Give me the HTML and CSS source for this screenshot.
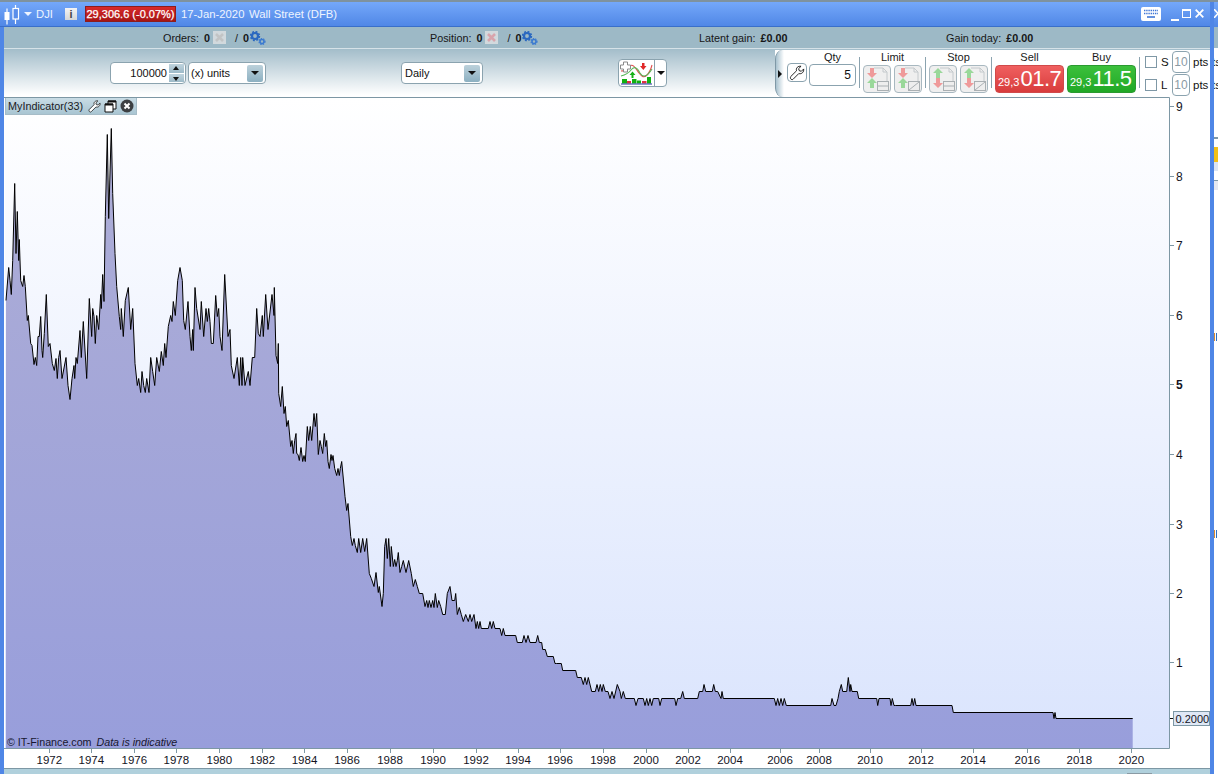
FILE: index.html
```html
<!DOCTYPE html>
<html lang="en">
<head>
<meta charset="utf-8">
<title>DJI - Wall Street (DFB)</title>
<link rel="stylesheet" href="styles.css">
</head>
<body>
<svg class="defs" width="0" height="0" aria-hidden="true">
  <symbol id="gears" viewBox="0 0 16 14">
    <circle cx="5" cy="5" r="3" fill="none" stroke="#2a68c0" stroke-width="2.2"/>
    <circle cx="5" cy="5" r="4.4" fill="none" stroke="#2a68c0" stroke-width="1.6" stroke-dasharray="1.9 1.55"/>
    <circle cx="12" cy="10.5" r="2" fill="none" stroke="#3b7ad0" stroke-width="1.6"/>
    <circle cx="12" cy="10.5" r="3" fill="none" stroke="#3b7ad0" stroke-width="1.2" stroke-dasharray="1.4 1.1"/>
  </symbol>
  <symbol id="cancel" viewBox="0 0 13 13">
    <rect width="13" height="13" fill="#e4e4e4" opacity=".75"/>
    <path d="M3 3l7 7M10 3l-7 7" stroke="currentColor" stroke-width="2.6"/>
  </symbol>
  <symbol id="wrench" viewBox="0 0 20 20">
    <path d="M3 14L9.5 7.5C8.5 4.5 11 2 14.5 2.5L11.8 5.2L12.5 7.4L14.8 8.1L17.4 5.5C18 9 15 11.6 12 10.6L5.6 17C4 18.4 1.8 16 3 14Z" fill="#fff" stroke="#111" stroke-width="1"/>
  </symbol>
  <symbol id="arrows-rg" viewBox="0 0 28 28">
    <path d="M7 3h4v5h3l-5 5-5-5h3z" fill="#ef9a9a"/>
    <path d="M9 13l5 5h-3v5H7v-5H4z" fill="#9ad89a"/>
  </symbol>
  <symbol id="arrows-gr" viewBox="0 0 28 28">
    <path d="M9 3l5 5h-3v5H7V8H4z" fill="#9ad89a"/>
    <path d="M7 13h4v5h3l-5 5-5-5h3z" fill="#ef9a9a"/>
  </symbol>
  <symbol id="page-table" viewBox="0 0 28 28">
    <path d="M11 3h9l4 4v9" fill="none" stroke="#c4c9cc"/>
    <path d="M20 3v4h4" fill="none" stroke="#c4c9cc"/>
    <rect x="14.5" y="16.5" width="11" height="9" fill="#eee" stroke="#aab0b3"/>
    <path d="M14.5 21h11" stroke="#aab0b3"/>
  </symbol>
  <symbol id="page-line" viewBox="0 0 28 28">
    <path d="M11 3h9l4 4v9" fill="none" stroke="#c4c9cc"/>
    <path d="M20 3v4h4" fill="none" stroke="#c4c9cc"/>
    <rect x="14.5" y="16.5" width="11" height="9" fill="#eee" stroke="#aab0b3"/>
    <path d="M15 25l10-8" stroke="#aab0b3"/>
  </symbol>
</svg>
<div class="screen">
  <div class="window">
    <header class="titlebar">
      <svg class="candles" viewBox="0 0 16 20" width="16" height="20" aria-hidden="true">
        <path d="M3 3.5v16M11.5 0v19" stroke="#fff" stroke-width="1.2"/>
        <rect x="0.5" y="7" width="5" height="8" fill="#fff"/>
        <rect x="9" y="3.5" width="5.5" height="10.5" fill="#5a8eea" stroke="#fff" stroke-width="1.2"/>
      </svg>
      <span class="caret-white"></span>
      <span class="symbol">DJI</span>
      <span class="info">i</span>
      <span class="badge">29,306.6 (-0.07%)</span>
      <span class="title-date">17-Jan-2020</span>
      <span class="title-name">Wall Street (DFB)</span>
      <svg class="keyboard" viewBox="0 0 20 14" width="20" height="14" aria-hidden="true">
        <rect width="20" height="14" rx="2" fill="#fff"/>
        <path d="M3 3.5h14M3 6.5h14" stroke="#3f76d6" stroke-width="1.6" stroke-dasharray="1.4 .8"/>
        <path d="M6 10h8" stroke="#3f76d6" stroke-width="1.6"/>
      </svg>
      <span class="win-min"></span>
      <span class="win-max"></span>
      <svg class="win-close" viewBox="0 0 9 9" width="9" height="9" aria-hidden="true"><path d="M.7.7l7.6 7.6M8.3.7L.7 8.3" stroke="#fff" stroke-width="1.8"/></svg>
    </header>

    <div class="statusbar">
      <div class="stat stat-orders">
        <span>Orders:</span><b class="num">0</b>
        <svg class="cancel cancel-grey" width="13" height="13"><use href="#cancel"/></svg>
        <span class="slash">/</span><b class="num-b">0</b>
        <svg class="gears" width="16" height="14"><use href="#gears"/></svg>
      </div>
      <div class="stat stat-position">
        <span>Position:</span><b class="num">0</b>
        <svg class="cancel cancel-pink" width="13" height="13"><use href="#cancel"/></svg>
        <span class="slash">/</span><b class="num-b">0</b>
        <svg class="gears" width="16" height="14"><use href="#gears"/></svg>
      </div>
      <div class="stat stat-latent"><span>Latent gain:</span><b class="num">£0.00</b></div>
      <div class="stat"><span>Gain today:</span><b class="num">£0.00</b></div>
    </div>

    <div class="toolbar">
      <div class="field spinner">
        <span class="field-value">100000</span>
        <span class="spin"><i class="spin-up"></i><i class="spin-down"></i></span>
      </div>
      <div class="field select select-units"><span>(x) units</span><i class="select-btn"></i></div>
      <div class="field select select-period"><span>Daily</span><i class="select-btn"></i></div>
      <div class="chart-btn">
        <svg class="chart-btn-icon" viewBox="0 0 35 26" width="35" height="26" aria-hidden="true">
          <path d="M2 11C7 11 8 9 11 6C14 3 17 9 20 13C23 17 25 18 28 15C31 12 32 9 33 5" fill="none" stroke="#e05050" stroke-width="1.1"/>
          <path d="M2 16C6 15 9 14 12 10C15 6 18 7 21 13C24 18 28 17 33 9" fill="none" stroke="#58b858" stroke-width="1.1"/>
          <path d="M4.500 2h4v3h3v4h-3v3h-4V9h-3V5h3z" fill="#fff" stroke="#8a8a8a"/>
          <path d="M13.500 11.500l3 3.500h-2v3h-2v-3h-2z" fill="#18b018"/>
          <path d="M23 3h2.500v3h2l-3.200 4L21 6h2z" fill="#e02828"/>
          <path d="M3 19h5v4.500H3zM13 19h4.500v4.500H13zM28 17h4v6.500h-4z" fill="#10b010"/>
          <path d="M18 20.500h4v3h-4z" fill="#10b010"/>
          <path d="M8 21h4v2.500H8zM23 21h4.500v2.500H23z" fill="#e03040"/>
          <path d="M2 24h31" stroke="#2030a0"/>
        </svg>
        <span class="chart-btn-drop"><i class="caret-black"></i></span>
      </div>

      <div class="trade-panel">
        <div class="panel-handle"><i class="handle-arrow"></i></div>
        <button class="tool-btn" type="button"><svg width="18" height="18"><use href="#wrench"/></svg></button>
        <div class="col col-qty">
          <span class="col-label">Qty</span>
          <div class="qty-input">5</div>
        </div>
        <span class="sep"></span>
        <div class="col">
          <span class="col-label">Limit</span>
          <div class="btn-pair">
            <span class="order-btn"><svg width="28" height="28"><use href="#arrows-rg"/><use href="#page-table"/></svg></span>
            <span class="order-btn"><svg width="28" height="28"><use href="#arrows-rg"/><use href="#page-line"/></svg></span>
          </div>
        </div>
        <span class="sep"></span>
        <div class="col">
          <span class="col-label">Stop</span>
          <div class="btn-pair">
            <span class="order-btn"><svg width="28" height="28"><use href="#arrows-gr"/><use href="#page-table"/></svg></span>
            <span class="order-btn"><svg width="28" height="28"><use href="#arrows-gr"/><use href="#page-line"/></svg></span>
          </div>
        </div>
        <span class="sep"></span>
        <div class="col">
          <span class="col-label">Sell</span>
          <div class="price price-sell"><small>29,3</small><strong>01.7</strong></div>
        </div>
        <div class="col col-buy">
          <span class="col-label">Buy</span>
          <div class="price price-buy"><small>29,3</small><strong>11.5</strong></div>
        </div>
        <span class="sep"></span>
        <div class="options">
          <div class="opt-row"><i class="check"></i><span class="opt-letter">S</span><span class="pts-input">10</span><span>pts</span></div>
          <div class="opt-row"><i class="check"></i><span class="opt-letter">L</span><span class="pts-input">10</span><span>pts</span></div>
        </div>
      </div>
    </div>

    <main class="chart">
      <div class="indicator-tag">
        <span class="indicator-name">MyIndicator(33)</span>
        <svg width="15" height="15"><use href="#wrench"/></svg>
        <svg class="tag-windows" viewBox="0 0 13 13" width="13" height="13" aria-hidden="true">
          <path d="M4 1h8v8H4z" fill="#fff" stroke="#111"/><path d="M4 1.500h8" stroke="#111" stroke-width="2"/>
          <path d="M1 4h8v8H1z" fill="#fff" stroke="#111"/><path d="M1 4.500h8" stroke="#111" stroke-width="2"/>
        </svg>
        <svg class="tag-close" viewBox="0 0 14 14" width="14" height="14" aria-hidden="true">
          <circle cx="7" cy="7" r="6.500" fill="#3c3f42"/><path d="M4.500 4.500l5 5M9.500 4.500l-5 5" stroke="#fff" stroke-width="2"/>
        </svg>
      </div>
      <svg id="plot" class="plot" viewBox="4 97 1206 672" width="1206" height="672" aria-label="MyIndicator chart"></svg>
      <div class="copyright">© IT-Finance.com <em>Data is indicative</em></div>
    </main>

    <div class="footer"><span class="footer-grip"></span></div>
  </div>

  <div class="behind">
    <div class="behind-title"><svg viewBox="0 0 4 9" width="4" height="9" aria-hidden="true"><path d="M0 0l4 4.500M0 9l4-4.500" stroke="#fff" stroke-width="1.500"/></svg></div>
    <div class="behind-status"></div>
    <div class="behind-text">ts</div>
    <div class="behind-text">ts</div>
    <div class="frag-blue"></div>
    <div class="frag-yellow"></div>
    <div class="frag-pale"></div>
    <div class="frag-brown"></div>
    <div class="frag-glyph"></div>
    <div class="frag-glyph frag-glyph-2"></div>
  </div>
</div>
<script src="chart.js"></script>
</body>
</html>
```

FILE: styles.css
```css
* { box-sizing: border-box; }
html, body { margin: 0; padding: 0; height: 100%; overflow: hidden; background: #fff; }
body { font-family: "Liberation Sans", Arial, sans-serif; font-size: 11px; color: #111; }
i { display: block; }
.defs { position: absolute; }

.screen { display: flex; width: 1218px; height: 774px; border-top: 2px solid #7f929e; }
.window {
  width: 1214px; height: 772px; display: flex; flex-direction: column; flex: none;
  border-left: 4px solid #4f86e6; border-right: 4px solid #4f86e6; background: #fff;
}

/* title bar */
.titlebar {
  height: 25px; flex: none; margin-left: -4px; display: flex; align-items: center; color: #eef4ff;
  background: linear-gradient(#74a8fa, #5087e6); border-bottom: 1px solid #3a6fc9; font-size: 11.300px;
}
.candles { margin-left: 4px; flex: none; margin-top: 1px; }
.caret-white { width: 0; height: 0; flex: none; margin-left: 4px; border: 4px solid transparent; border-top: 4px solid #eef4ff; border-bottom: 0; }
.symbol { margin-left: 4px; width: 17px; flex: none; white-space: nowrap; }
.info {
  width: 12px; height: 12px; flex: none; margin-left: 12px; background: linear-gradient(#f4f4f4, #d4d6d8); color: #444;
  font: bold 11px/12px "Liberation Sans", sans-serif; text-align: center;
}
.badge {
  margin-left: 8px; width: 91px; height: 16px; flex: none; background: linear-gradient(#d82a2a, #a61414); border: 1px solid #8d1c1c;
  color: #fff; line-height: 14px; text-align: center; font-size: 11px; white-space: nowrap; -webkit-text-stroke: .25px #fff;
}
.title-date { margin-left: 5px; width: 68px; flex: none; white-space: nowrap; }
.title-name { white-space: nowrap; }
.keyboard { margin-left: auto; flex: none; }
.win-min { width: 8px; height: 2px; margin-left: 10px; margin-top: 11px; background: #fff; }
.win-max { width: 9px; height: 9px; margin-left: 3px; border: 1px solid #fff; border-top-width: 2px; margin-top: -1px; }
.win-close { margin-left: 4px; margin-right: 6px; margin-top: -1px; }

/* status bar */
.statusbar {
  height: 21px; flex: none; display: flex; padding-left: 159px; align-items: center;
  background: #9db9c6; font-size: 10.800px; color: #161616;
}
.stat { display: flex; align-items: center; white-space: nowrap; }
.stat-orders { width: 267px; }
.stat-position { width: 269px; }
.stat-latent { width: 247px; }
.num { margin-left: 5px; }
.cancel { margin-left: 3px; flex: none; }
.cancel-grey { color: #c2c4c5; }
.cancel-pink { color: #d8a4ac; }
.slash { margin-left: 9px; }
.num-b { margin-left: 5px; }
.gears { margin-left: 1px; flex: none; }

/* toolbar */
.toolbar {
  height: 49px; flex: none; display: flex; align-items: flex-start; position: relative;
  background: linear-gradient(#a3bdca, #fff 96%); border-top: 1px solid #d6e2e8;
}
.field {
  background: #fff; border: 1px solid #8ba3af; border-radius: 4px; height: 22px; display: flex; align-items: center; flex: none;
}
.spinner { margin-left: 106px; margin-top: 13px; width: 76px; justify-content: flex-end; }
.field-value { margin-right: 2px; }
.spin { width: 15px; height: 18px; display: flex; flex-direction: column; gap: 1px; margin-right: 1px; }
.spin i { flex: 1; background: linear-gradient(#c0d4de, #9dbac8); position: relative; }
.spin i::after { content: ""; position: absolute; left: 4px; width: 0; height: 0; border-left: 3.500px solid transparent; border-right: 3.500px solid transparent; }
.spin-up::after { top: 2px; border-bottom: 4px solid #111; }
.spin-down::after { top: 3px; border-top: 4px solid #111; }
.select { padding-left: 2px; justify-content: space-between; margin-top: 13px; }
.select-units { margin-left: 2px; width: 78px; }
.select-period { margin-left: 135px; width: 82px; padding-left: 3px; }
.select-btn {
  width: 16px; height: 17px; margin-right: 2px; background: linear-gradient(#bcd1db, #8cb0c1); border-radius: 2px; position: relative;
}
.select-btn::after {
  content: ""; position: absolute; left: 4px; top: 6px; width: 0; height: 0;
  border-left: 4px solid transparent; border-right: 4px solid transparent; border-top: 4px solid #111;
}
.chart-btn {
  margin-left: 135px; margin-top: 10px; width: 49px; height: 28px; display: flex; background: #fff; flex: none;
  border: 1px solid #8ba3af; border-radius: 4px; overflow: hidden;
}
.chart-btn-icon { flex: none; }
.chart-btn-drop { flex: 1; border-left: 1px solid #8ba3af; display: flex; align-items: center; justify-content: center; }
.caret-black { width: 0; height: 0; border-left: 4px solid transparent; border-right: 4px solid transparent; border-top: 4px solid #111; }

/* trade panel */
.trade-panel { margin: 1px 0 0 auto; width: 435px; height: 47px; display: flex; align-items: flex-start; background: #fff; overflow: hidden; flex: none; }
.panel-handle {
  width: 9px; height: 47px; flex: none; border-left: 1px solid #7f98a6; border-radius: 7px 0 0 7px / 9px 0 0 9px;
  background: linear-gradient(90deg, #a9c2cf, #fff); display: flex; align-items: center;
}
.handle-arrow { margin-left: 2px; width: 0; height: 0; border-top: 4px solid transparent; border-bottom: 4px solid transparent; border-left: 4px solid #111; }
.tool-btn {
  margin: 13px 0 0 3px; width: 20px; height: 19px; padding: 0; background: #fff; border: 1px solid #8ba3af; border-radius: 4px;
  display: flex; align-items: center; justify-content: center;
}
.col { display: flex; flex-direction: column; align-items: center; flex: none; }
.col-qty { margin-left: 2px; width: 47px; }
.col-buy { margin-left: 3px; }
.col-label { height: 15px; line-height: 14px; color: #1a1a1a; }
.qty-input {
  width: 47px; height: 22px; margin-top: -1px; border: 1px solid #8ba3af; border-radius: 4px; text-align: right;
  padding-right: 4px; line-height: 21px; font-size: 12px;
}
.sep { width: 1px; height: 31px; margin: 7px 3px 0; background: #8ba3af; flex: none; }
.btn-pair { display: flex; gap: 3px; }
.order-btn { width: 28px; height: 28px; background: #efefef; border: 1px solid #a8b8c0; border-radius: 4px; overflow: hidden; display: block; }
.order-btn svg { display: block; margin: -1px; }
.price {
  width: 69px; height: 28px; border-radius: 4px; color: #fff; display: flex; align-items: baseline; padding-left: 2px; white-space: nowrap;
  line-height: 26px;
}
.price small { font-size: 11px; }
.price strong { font-size: 22px; font-weight: 400; letter-spacing: -.5px; margin-left: 1px; }
.price-sell { background: linear-gradient(#f06060, #d83c3c); border: 1px solid #d04a4a; }
.price-buy { background: linear-gradient(#3cc03c, #20a826); border: 1px solid #2a9a30; }
.options { margin-left: 2px; padding-top: 1px; display: flex; flex-direction: column; gap: 1px; flex: none; font-size: 11.500px; }
.opt-row { height: 22px; display: flex; align-items: center; }
.check { width: 12px; height: 12px; border: 1px solid #7f98a6; background: #fff; }
.opt-letter { width: 15px; margin-left: 4px; }
.pts-input {
  width: 18px; height: 22px; border: 1px solid #8ba3af; border-radius: 4px; color: #8a9aa4; text-align: center; line-height: 20px; margin-right: 3px; margin-left: -4px; font-size: 12px;
}

/* chart */
.chart { position: relative; height: 672px; flex: none; }
.plot { display: block; }
.plot .axis-x { font: 11.500px "Liberation Sans", sans-serif; fill: #14141e; text-anchor: middle; }
.plot .axis-y { font: 12px "Liberation Sans", sans-serif; fill: #14141e; }
.plot .axis-y-strong { font-weight: 700; }
.plot .value-text { font: 11px "Liberation Sans", sans-serif; fill: #14141e; }
.indicator-tag {
  position: absolute; left: 1px; top: 1px; width: 132px; height: 17px; display: flex; align-items: center;
  background: linear-gradient(#c9dce5, #a9c5d2); border: 1px solid #a6bcc7; border-top: 0; padding-left: 2px;
}
.indicator-name { white-space: nowrap; color: #1b1b24; width: 79px; font-size: 10.800px; }
.tag-windows { margin-left: 2px; }
.tag-close { margin-left: 3px; }
.copyright { position: absolute; left: 3px; bottom: 20px; font-size: 10.700px; line-height: 13px; color: #171730; white-space: nowrap; }
.copyright em { margin-left: 2px; }
.footer { flex: 1; background: #b0d0dc; position: relative; }
.footer-grip { position: absolute; left: 1123px; bottom: 0; width: 25px; height: 1px; background: #8a9aa4; }

/* window behind, visible as a sliver */
.behind { width: 4px; flex: none; overflow: hidden; font-size: 11.500px; }
.behind-title { height: 25px; background: linear-gradient(#74a8fa, #5087e6); padding-top: 7px; }
.behind-title svg { display: block; }
.behind-status { height: 21px; background: #9db9c6; }
.behind-text { height: 23px; line-height: 29px; margin-left: -2px; color: #111; }
.frag-blue { height: 2px; margin-top: 43px; background: #7f98a6; }
.frag-yellow { height: 15px; margin-top: 8px; background: #f2c018; }
.frag-pale { height: 9px; background: #dde5f2; }
.frag-brown { height: 10px; margin-top: 9px; background: #e6e8f0; border-top: 1px solid #7f98a6; }
.frag-glyph { width: 3px; height: 8px; margin-top: 143px; border-left: 1px solid #d88a30; border-right: 1px solid #3070c0; }
.frag-glyph-2 { margin-top: 189px; }
```

FILE: chart.js
```js
// Indicator series, sampled in 3x coordinates per stretch of the chart.
var stretches = [
  { ox: 0, oy: 360, pts: [18,540,26,442,30,480,34,522,38,420,44,190,48,400,52,275,56,420,58,358,62,480,68,500,72,465,76,500,82,600,85,585,92,670,96,675,102,732,106,712,110,735,114,650,118,650,122,590,126,690,128,712,133,640,139,522,145,680,150,670,157,730,163,752,168,715,172,775,176,712,180,692,186,775,198,712,204,795,210,838,216,775,222,735,224,775,228,712,232,730,240,630,244,712,250,605,260,775,268,535,275,650,278,565,282,590,286,670,290,585,296,628,302,522,304,565,308,462,312,545,316,290,322,42,326,295,334,25,338,220,345,400,350,500,358,590,362,628,364,565,370,650,376,540,385,502,392,628,398,565,405,730,412,795,416,775,422,818,426,755,431,795,436,818,440,775,447,818,452,712,458,755,464,795,470,712,478,755,484,695,490,735,494,670,498,712,505,620,512,585,516,605,520,545,526,585,533,480,540,442,547,480,551,600,556,628,564,545,570,650,574,690,578,628,580,690,585,502,590,565,600,628,604,545,611,650,618,565,622,605,626,565,630,605,634,670,640,670,647,525,652,590,656,565,660,650,666,690,674,462,684,650,690,628,694,735,702,775,712,712,718,795,722,712,726,795,728,712,735,795,745,755,750,795,757,712,764,712,770,565,775,640,780,650,787,585,790,650,797,522,804,628,816,522,822,585] },
  { ox: 690, oy: 840, pts: [133,22,138,225,143,250,145,190,146,340,152,378,157,318,162,400,166,380,170,438,175,420,182,500,186,480,190,520,194,480,198,460,200,520,204,522,208,542,213,502,218,545,222,525,226,545,232,440,236,480,241,440,245,480,252,400,256,440,260,400,265,522,270,480,274,500,278,520,283,460,287,500,290,480,294,545,298,565,303,522,306,540,309,525,314,565,320,585,324,565,328,585,331,565,335,545,345,650,350,690,354,670,362,770,367,795,372,775,376,795,382,818,386,775,392,818,398,775,404,815,410,775,418,880,424,895,432,920,438,878,445,938,448,920,456,980,460,940,464,800,468,775,472,835,476,775,481,858,484,798,490,858,494,838,498,858,502,840,505,818,510,878,515,860,520,840,528,878,536,840,544,880,550,918,556,898,562,918,568,940,576,940] },
  { ox: 1260, oy: 1680, pts: [8,100,15,140,20,122,24,142,28,122,33,142,38,122,42,142,46,100,52,142,56,122,62,140,68,163,76,163,82,100,90,80,96,122,104,122,107,100,112,163,118,143,124,163,130,185,137,163,145,185,150,163,155,185,162,163,168,205,172,185,176,205,180,185,184,205,205,205,210,185,215,205,220,185,225,205,240,205,245,226,250,205,255,226,287,226,292,247,307,247,312,226,318,247,324,226,330,247,348,247,353,226,358,247,365,247,368,268,376,268,382,290,400,290,405,310,410,310,424,310,428,331,467,331,472,352,484,352,490,373,495,352,500,373,505,352,515,394,526,394,531,373,536,394,541,373,546,394,550,373,556,394,564,394,570,415,576,394,582,415,592,373,600,394,604,415,610,394,616,415,643,415,648,436,654,415,670,415,675,436,680,415,685,436,690,415,695,436,700,415,716,415,720,436,725,415,764,415,768,436,773,415,782,415,788,394,793,415,833,415,838,394,848,394,852,373,857,394,877,394,881,373,886,394,893,394] },
  { ox: 2160, oy: 1980, pts: [3,115,6,95,10,115,163,115,168,136,173,115,178,136,183,115,188,136,193,115,199,136,332,136,336,115,342,136,348,136,354,115,358,95,364,73,368,95,380,95,385,52,390,95,392,73,396,95,412,95,416,115,470,115,473,136,477,115,510,115,513,136,517,115,522,136,526,136,572,136,576,115,580,136,584,115,588,136,696,136,700,157,900,157] },
  { ox: 3000, oy: 2040, pts: [159,97,162,115,165,97,168,115,398,115] }
];

var years = [[1972,49.3],[1974,91.3],[1976,134.3],[1978,176.3],[1980,219.3],[1982,262.3],[1984,304.5],[1986,347],[1988,390],[1990,433],[1992,476],[1994,518],[1996,560],[1998,603],[2000,646],[2002,688],[2004,730],[2006,780],[2008,819],[2010,870],[2012,921],[2014,973],[2016,1027.3],[2018,1079.3],[2020,1131.3]];
var levels = [[9,106],[8,176],[7,245],[6,315],[5,384],[4,454],[3,524],[2,593],[1,662]];

var NS = "http://www.w3.org/2000/svg";
var plot = document.getElementById("plot");

function add(parent, name, attrs, text) {
  var el = document.createElementNS(NS, name);
  for (var k in attrs) el.setAttribute(k, attrs[k]);
  if (text !== undefined) el.textContent = text;
  parent.appendChild(el);
  return el;
}

var defs = add(plot, "defs", {});
var bg = add(defs, "linearGradient", { id: "bg", x1: 0, y1: 0, x2: 0, y2: 1 });
add(bg, "stop", { offset: 0, "stop-color": "#ffffff" });
add(bg, "stop", { offset: 1, "stop-color": "#dae4fd" });
var area = add(defs, "linearGradient", { id: "area", gradientUnits: "userSpaceOnUse", x1: 0, y1: 130, x2: 0, y2: 748 });
add(area, "stop", { offset: 0, "stop-color": "#aeaed6" });
add(area, "stop", { offset: 1, "stop-color": "#989edb" });

var PLOT_LEFT = 5, PLOT_RIGHT = 1169, PLOT_TOP = 97, PLOT_BOTTOM = 748;

add(plot, "rect", { x: PLOT_LEFT, y: PLOT_TOP + 1, width: PLOT_RIGHT - PLOT_LEFT, height: PLOT_BOTTOM - PLOT_TOP - 1, fill: "url(#bg)" });

var line = [];
stretches.forEach(function (s) {
  for (var i = 0; i < s.pts.length; i += 2) {
    var x = (s.pts[i] + s.ox) / 3;
    var y = Math.floor((s.pts[i + 1] + s.oy) / 3) + 0.5;
    line.push(x.toFixed(1) + "," + y);
  }
});
var first = line[0].split(",")[0];
var last = line[line.length - 1].split(",")[0];
add(plot, "polygon", { points: first + "," + PLOT_BOTTOM + " " + line.join(" ") + " " + last + "," + PLOT_BOTTOM, fill: "url(#area)" });
add(plot, "polyline", { points: line.join(" "), fill: "none", stroke: "#000", "stroke-width": 1, "stroke-linejoin": "miter" });

// Frame
var frame = "#7d97a4";
add(plot, "path", { d: "M4 97.5H1169.5V748.5H4", fill: "none", stroke: frame });
add(plot, "path", { d: "M4 768.5H1210", fill: "none", stroke: frame });

// Axes
years.forEach(function (y) {
  var x = Math.floor(y[1]) + 0.5;
  add(plot, "path", { d: "M" + x + " 749V753", stroke: frame });
  add(plot, "text", { x: y[1], y: 764, "class": "axis-x" }, String(y[0]));
});
levels.forEach(function (l) {
  add(plot, "path", { d: "M1170 " + (l[1] + 0.5) + "H1174", stroke: frame });
  add(plot, "text", { x: 1176, y: l[1] + 5, "class": l[0] === 5 ? "axis-y axis-y-strong" : "axis-y" }, String(l[0]));
});

// Current value tag
add(plot, "path", { d: "M1170 718.5H1174", stroke: "#111" });
add(plot, "rect", { x: 1173.5, y: 711.5, width: 36, height: 14, fill: "#dfe8f6", stroke: frame });
add(plot, "text", { x: 1175.5, y: 722.5, "class": "value-text" }, "0.2000");
```
